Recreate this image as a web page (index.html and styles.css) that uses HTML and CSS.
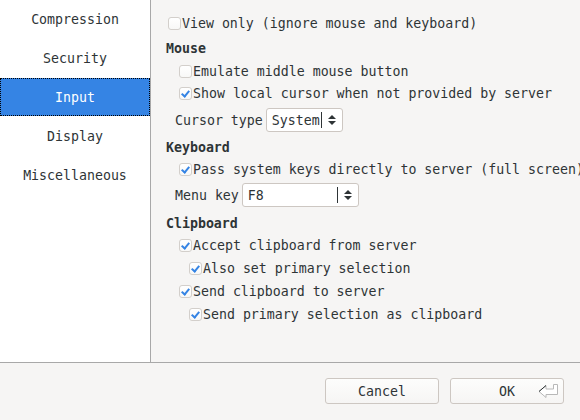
FILE: index.html
```html
<!DOCTYPE html>
<html>
<head>
<meta charset="utf-8">
<link rel="stylesheet" href="styles.css">
</head>
<body>
<div class="window">
  <div class="main">
    <nav class="sidebar">
      <div class="nav-item">Compression</div>
      <div class="nav-item">Security</div>
      <div class="nav-item selected">Input</div>
      <div class="nav-item">Display</div>
      <div class="nav-item">Miscellaneous</div>
    </nav>
    <section class="panel">
      <label class="row r-view"><span class="cb"></span>View only (ignore mouse and keyboard)</label>
      <div class="heading h-mouse">Mouse</div>
      <label class="row ind1 r-emu"><span class="cb"></span>Emulate middle mouse button</label>
      <label class="row ind1"><span class="cb on"></span>Show local cursor when not provided by server</label>
      <div class="field f-cursor"><span class="lbl">Cursor type</span><span class="select s-cursor"><span class="val">System</span><span class="spin"></span></span></div>
      <div class="heading h-kbd">Keyboard</div>
      <label class="row ind1 r-pass"><span class="cb on"></span>Pass system keys directly to server (full screen)</label>
      <div class="field f-menu"><span class="lbl">Menu key</span><span class="select s-menu"><span class="val">F8</span><span class="spin"></span></span></div>
      <div class="heading h-clip">Clipboard</div>
      <label class="row tall ind1 r-acc"><span class="cb on"></span>Accept clipboard from server</label>
      <label class="row tall ind2"><span class="cb on"></span>Also set primary selection</label>
      <label class="row tall ind1"><span class="cb on"></span>Send clipboard to server</label>
      <label class="row tall ind2"><span class="cb on"></span>Send primary selection as clipboard</label>
    </section>
  </div>
  <div class="footer">
    <button class="btn">Cancel</button>
    <button class="btn ok">OK<svg class="ret" width="21" height="16" viewBox="0 0 21 16"><path d="M1 8.5 L8 2.5 V6 H15.5 V1.5 H19.5 V11.5 H8 V14.5 Z" fill="#fff" stroke="#b8b8b8" stroke-width="1"/><path d="M1 8.5 L8 2.5" stroke="#2e3436" stroke-width="1"/></svg></button>
  </div>
</div>
</body>
</html>
```

FILE: styles.css
```css
* { box-sizing: border-box; }
html, body { margin: 0; padding: 0; }
body {
  width: 580px;
  height: 420px;
  background: #f6f5f4;
  font-family: "DejaVu Sans Mono", monospace;
  font-size: 13.25px;
  color: #2e3436;
  overflow: hidden;
}
.window { width: 580px; height: 420px; display: flex; flex-direction: column; }
.main {
  display: flex;
  height: 363px;
  border-bottom: 1px solid #a8a8a8;
}
.sidebar {
  width: 151px;
  flex: none;
  background: #ffffff;
  border-right: 1px solid #a8a8a8;
  display: flex;
  flex-direction: column;
}
.nav-item {
  height: 39px;
  display: flex;
  align-items: center;
  justify-content: center;
}
.nav-item.selected {
  background: #3584e4;
  color: #ffffff;
  border: 1px dotted #000;
  height: 38px;
  margin-bottom: 1px;
}
.panel {
  flex: 1;
  padding: 12px 0 0 15px;
  overflow: hidden;
  white-space: nowrap;
  display: flex;
  flex-direction: column;
}
.row {
  height: 22px;
  display: flex;
  align-items: center;
  padding-left: 2px;
}
.row.tall { height: 23px; }
.ind1 { padding-left: 13px; }
.ind2 { padding-left: 23px; }
.cb {
  width: 13px;
  height: 13px;
  flex: none;
  border: 1px solid #d3cfcb;
  border-radius: 3px;
  background: linear-gradient(#ffffff, #f8f8f7);
  margin-right: 1px;
  position: relative;
}
.cb.on::after {
  content: "";
  position: absolute;
  left: 3px;
  top: 1px;
  width: 3px;
  height: 6px;
  border-right: 2px solid #3584e4;
  border-bottom: 2px solid #3584e4;
  transform: rotate(40deg);
}
.heading {
  font-weight: bold;
  height: 20px;
  display: flex;
  align-items: center;
}
.h-mouse { margin-top: 4px; }
.r-emu { margin-top: 2px; }
.h-kbd { margin-top: 5px; }
.r-pass { margin-top: 1px; }
.h-clip { margin-top: 6px; }
.r-acc { margin-top: 1px; }
.field {
  height: 24px;
  display: flex;
  align-items: center;
  padding-left: 9px;
}
.f-cursor { margin-top: 4px; }
.f-menu { margin-top: 3px; }
.lbl { margin-right: 3px; }
.select {
  height: 24px;
  background: #ffffff;
  border: 1px solid #cdc7c2;
  border-radius: 3px;
  display: flex;
  align-items: center;
  justify-content: space-between;
  padding-left: 5px;
}
.s-cursor { width: 77px; }
.s-menu { width: 117px; }
.spin {
  width: 21px;
  height: 16px;
  border-left: 1px solid #2e3436;
  position: relative;
  flex: none;
}
.spin::before, .spin::after {
  content: "";
  position: absolute;
  left: 6px;
  width: 0;
  height: 0;
  border-left: 4px solid transparent;
  border-right: 4px solid transparent;
}
.spin::before { top: 3px; border-bottom: 4px solid #2e3436; }
.spin::after { top: 9px; border-top: 4px solid #2e3436; }
.footer {
  flex: 1;
  display: flex;
  justify-content: flex-end;
  align-items: flex-start;
  gap: 11px;
  padding: 15px 16px 0 0;
}
.btn {
  width: 114px;
  height: 26px;
  border: 1px solid #cdc7c2;
  border-radius: 3px;
  background: linear-gradient(#fdfdfc, #f6f5f4);
  font-family: "DejaVu Sans Mono", monospace;
  font-size: 13.25px;
  color: #2e3436;
  padding: 0;
  position: relative;
}
.ret { position: absolute; right: 4px; top: 4px; }
```
